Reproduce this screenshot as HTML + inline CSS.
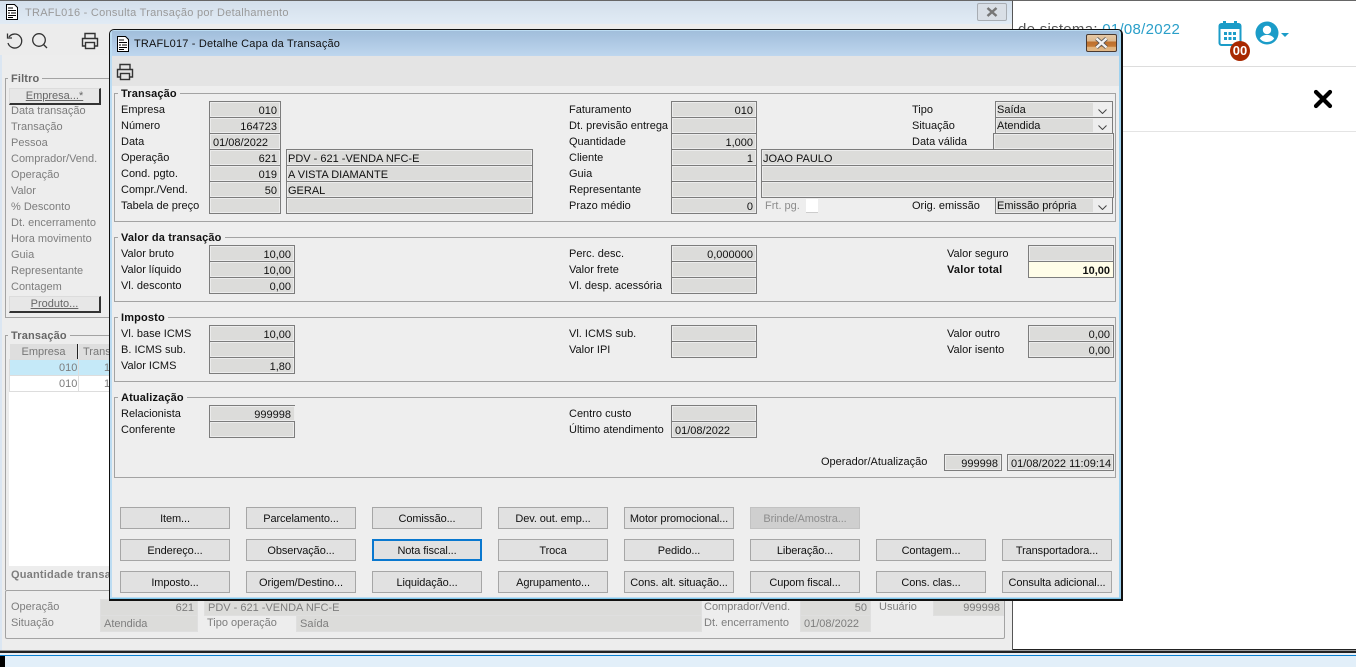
<!DOCTYPE html>
<html lang="pt"><head><meta charset="utf-8"><title>TRAFL017</title>
<style>
html,body{margin:0;padding:0;width:1356px;height:667px;overflow:hidden;background:#fff}
body{position:relative;font:11px/16px "Liberation Sans",sans-serif;color:#111;letter-spacing:0}
div,span,svg{position:absolute;box-sizing:border-box;white-space:nowrap}
.t{height:16px;margin-top:1px}
.f{height:17px;border:1px solid #7c7c7c;background:#dcdcda;box-shadow:inset 0 0 0 1px #ececec;text-align:right;padding:2px 3px 0;line-height:15px}
.l{text-align:left}
.n{padding-left:1px}
.g{border:1px solid #a3a3a3;height:20px}
.gt{font-weight:bold;background:#eee;padding:0 3px;top:-8px;left:3px;letter-spacing:.15px}
.b{width:110px;height:22px;border:1px solid #a6a6a6;background:#e1e1e1;text-align:center;line-height:22px;letter-spacing:-.1px}
.bg .t{color:#7d7d7d;margin-top:0}
.bf{height:17px;border:1px solid #dfdfdf;background:#dcdcda;color:#7d7d7d;text-align:right;padding:1px 3px 0;line-height:15px}
.sel{padding-left:1px;padding-top:1px}
.sel::after{content:"";position:absolute;right:-1px;top:-1px;bottom:-1px;width:19px;background:#eee;border:1px solid #7c7c7c;border-left:0}
.sel svg{z-index:2;right:5px;top:7px}
</style></head><body>

<!-- page behind -->
<div style="left:0;top:0;width:1356px;height:1px;background:#666"></div>
<div class="t" style="margin:0;left:1018px;top:21px;font-size:15px;line-height:18px;color:#555;letter-spacing:.28px">de sistema: <span style="position:static;color:#2a9fc9">01/08/2022</span></div>
<div style="left:1012px;top:1px;width:344px;height:19px;background:#fff"></div>
<div style="left:1012px;top:66px;width:344px;height:1px;background:#ddd"></div>
<div style="left:1012px;top:131px;width:344px;height:1px;background:#e4e4e4"></div>
<svg style="left:1218px;top:20px" width="24" height="26" viewBox="0 0 24 26"><rect x="1.500" y="4" width="21" height="21" rx="2" fill="none" stroke="#1b9cc8" stroke-width="2"/><rect x="1" y="4" width="22" height="5" fill="#1b9cc8"/><rect x="5" y="1" width="3" height="5" fill="#1b9cc8"/><rect x="16" y="1" width="3" height="5" fill="#1b9cc8"/><g fill="#1b9cc8"><rect x="6" y="12" width="3" height="3"/><rect x="10.500" y="12" width="3" height="3"/><rect x="15" y="12" width="3" height="3"/><rect x="6" y="17" width="3" height="3"/><rect x="10.500" y="17" width="3" height="3"/><rect x="15" y="17" width="3" height="3"/></g></svg>
<div style="left:1230px;top:41px;width:20px;height:20px;border-radius:50%;background:#a82800;color:#fff;font:bold 13px/20px 'Liberation Sans',sans-serif;text-align:center;letter-spacing:0">00</div>
<svg style="left:1255px;top:21px" width="36" height="24" viewBox="0 0 36 24"><circle cx="12" cy="12" r="11.500" fill="#1b9cc8"/><circle cx="12" cy="9" r="4.200" fill="#fff"/><path d="M4.800 17.500C6.500 14.800 9 14 12 14s5.500.8 7.200 3.500C17.500 19.800 15 21 12 21s-5.500-1.200-7.200-3.500z" fill="#fff"/><path d="M26 12h8l-4 4z" fill="#1b9cc8"/></svg>
<svg style="left:1313px;top:89px" width="20" height="20" viewBox="0 0 20 20"><path d="M3 3L17 17M17 3L3 17" stroke="#000" stroke-width="4.200" stroke-linecap="round"/></svg>

<!-- bottom bar -->
<div style="left:0;top:649px;width:1356px;height:4px;background:linear-gradient(#222,#222 25%,#999 25%,#999 50%,#222 50%)"></div>
<div style="left:0;top:653px;width:1356px;height:2px;background:#e8eef4"></div>
<div style="left:0;top:655px;width:1356px;height:12px;background:#e2eff9;border-top:1px solid #0a7fd0"></div>
<div style="left:0;top:656px;width:5px;height:11px;background:#000"></div>

<!-- background window -->
<div class="bg" style="left:0;top:0;width:1013px;height:650px;background:#ededed;border-right:1px solid #555;border-top:1px solid #666;overflow:hidden">
 <div style="left:0;top:0;width:2px;height:652px;background:#dbe6f2"></div>
 <div style="left:0;top:0;width:1012px;height:23px;background:linear-gradient(#d3dfeb,#e1ebf5)"></div>
 <div style="left:0;top:23px;width:1012px;height:31px;background:#ececec"></div>
 <div class="t" style="left:25px;top:4px;font-size:11px;color:#9a9a9a;letter-spacing:.27px">TRAFL016 - Consulta Transação por Detalhamento</div>
 <svg style="left:6px;top:3px" width="12" height="16" viewBox="0 0 12 16"><path d="M.5.5h8l3 3v12H.5z" fill="#fff" stroke="#000"/><path d="M2 4h5M2 6.500h8M2 9h2M5 9h5M2 11.500h8M2 13.500h5" stroke="#000"/></svg>
 <div style="left:977px;top:2px;width:30px;height:18px;border:1px solid #a8adb3;border-radius:2px;background:#d9dfe6"></div>
 <svg style="left:985px;top:6px" width="14" height="10" viewBox="0 0 14 10"><path d="M2.500 1L11.500 9M11.500 1L2.500 9" stroke="#777" stroke-width="2.500"/></svg>
 <svg style="left:5px;top:31px" width="20" height="18" viewBox="0 0 20 18" fill="none" stroke="#333" stroke-width="1.300"><path d="M4 5A7 7 0 1 1 3 11"/><path d="M2.500 1.500V6H7"/></svg>
 <svg style="left:31px;top:31px" width="18" height="18" viewBox="0 0 18 18" fill="none" stroke="#333" stroke-width="1.300"><circle cx="8" cy="8" r="6.300"/><path d="M12.500 12.500L16 16"/></svg>
 <svg style="left:81px;top:31px" width="18" height="18" viewBox="0 0 18 18" fill="none" stroke="#333" stroke-width="1.400"><path d="M4 6V1.500h10V6M4 14H1.500V6.500h15V14H14"/><rect x="4.500" y="10.500" width="9" height="6"/></svg>
 <div class="g" style="left:5px;top:77px;width:110px;height:240px;border-right:0"><span class="gt" style="background:#ededed;color:#666;top:-8px;left:2px">Filtro</span></div>
 <div style="left:9px;top:87px;width:92px;height:17px;border:1px solid #dcdcdc;border-right:2px solid #333;border-bottom:2px solid #333;background:#e7e7e7;color:#666;text-align:center;line-height:14px;text-decoration:underline">Empresa...*</div>
 <div class="t" style="left:11px;top:102px">Data transação</div>
 <div class="t" style="left:11px;top:118px">Transação</div>
 <div class="t" style="left:11px;top:134px">Pessoa</div>
 <div class="t" style="left:11px;top:150px">Comprador/Vend.</div>
 <div class="t" style="left:11px;top:166px">Operação</div>
 <div class="t" style="left:11px;top:182px">Valor</div>
 <div class="t" style="left:11px;top:198px">% Desconto</div>
 <div class="t" style="left:11px;top:214px">Dt. encerramento</div>
 <div class="t" style="left:11px;top:230px">Hora movimento</div>
 <div class="t" style="left:11px;top:246px">Guia</div>
 <div class="t" style="left:11px;top:262px">Representante</div>
 <div class="t" style="left:11px;top:278px">Contagem</div>
 <div style="left:9px;top:295px;width:92px;height:17px;border:1px solid #dcdcdc;border-right:2px solid #333;border-bottom:2px solid #333;background:#e7e7e7;color:#666;text-align:center;line-height:14px;text-decoration:underline">Produto...</div>

 <div class="g" style="left:5px;top:334px;width:110px;height:255px;border-right:0;border-bottom:0"><span class="gt" style="background:#ededed;color:#666;top:-8px;left:2px">Transação</span></div>
 <div style="left:9px;top:365px;width:101px;height:200px;background:#fff"></div>
 <div style="left:10px;top:343px;width:68px;height:16px;background:#dedede;text-align:center;color:#777;border-right:1px solid #222">Empresa</div>
 <div style="left:79px;top:343px;width:30px;height:16px;background:#dedede;color:#777;padding-left:4px;overflow:hidden">Transação</div>
 <div style="left:9px;top:358px;width:101px;height:17px;background:#c5e9f8;border:1px solid #ddd"></div>
 <div style="left:9px;top:374px;width:101px;height:17px;background:#fff;border:1px solid #ddd"></div>
 <div style="left:78px;top:358px;width:1px;height:33px;background:#ddd"></div>
 <div class="t" style="left:59px;top:359px">010</div><div class="t" style="left:59px;top:375px">010</div>
 <div class="t" style="left:104px;top:359px">1</div><div class="t" style="left:104px;top:375px">1</div>
 <div class="t" style="left:11px;top:566px;font-weight:bold;letter-spacing:.2px">Quantidade transação</div>
 <div class="g" style="left:5px;top:589px;width:1000px;height:49px;border-radius:2px"></div>
 <div class="t" style="left:11px;top:598px">Operação</div>
 <div class="t" style="left:11px;top:614px">Situação</div>
 <div class="bf" style="left:100px;top:598px;width:98px">621</div>
 <div class="bf l" style="left:100px;top:614px;width:98px;text-align:left">Atendida</div>
 <div class="bf" style="left:204px;top:598px;width:498px;text-align:left">PDV - 621 -VENDA NFC-E</div>
 <div class="t" style="left:207px;top:614px">Tipo operação</div>
 <div class="bf" style="left:296px;top:614px;width:406px;text-align:left">Saída</div>
 <div class="t" style="left:704px;top:598px">Comprador/Vend.</div>
 <div class="t" style="left:704px;top:614px">Dt. encerramento</div>
 <div class="bf" style="left:800px;top:598px;width:71px">50</div>
 <div class="bf" style="left:800px;top:614px;width:71px;text-align:left">01/08/2022</div>
 <div class="t" style="left:879px;top:598px">Usuário</div>
 <div class="bf" style="left:933px;top:598px;width:71px">999998</div>
</div>

<!-- main dialog -->
<div style="left:109px;top:29px;width:1014px;height:572px;background:#eee;border:1px solid #111;border-width:1px 2px 2px 1px;border-radius:5px 5px 0 0;box-shadow:inset 0 0 0 2px #bcdcf2;overflow:hidden">
 <div style="left:2px;top:1px;width:1008px;height:25px;background:linear-gradient(#a1bedb,#bed6ee)"></div>
 <div style="left:2px;top:26px;width:1008px;height:30px;background:#e4e4e4"></div>
 <div style="left:0;top:0;width:2px;height:570px;background:#bcdcf2"></div>
 <div style="left:1009px;top:0;width:3px;height:570px;background:#9fd2ef"></div>
 <div style="left:0;top:568px;width:1012px;height:2px;background:#7cc6ea"></div>
</div>
<svg style="left:117px;top:36px" width="12" height="16" viewBox="0 0 12 16"><path d="M.5.500h8l3 3v12H.5z" fill="#fff" stroke="#000"/><path d="M2 4h5M2 6.500h8M2 9h2M5 9h5M2 11.500h8M2 13.500h5" stroke="#000"/></svg>
<div class="t" style="margin:0;left:134px;top:36px;font-size:11px;color:#111;letter-spacing:.17px">TRAFL017 - Detalhe Capa da Transação</div>
<div style="left:1086px;top:34px;width:31px;height:18px;border:1px solid #4a3a30;border-radius:2px;background:linear-gradient(#e6c9a6 0,#dcb88e 40%,#bd6f2d 42%,#c67a35 72%,#dfb27c 75%,#e2b988 100%)"></div>
<svg style="left:1094px;top:37px" width="15" height="12" viewBox="0 0 15 12"><path d="M2.500 1.500L12.500 10.500M12.500 1.500L2.500 10.500" stroke="#555" stroke-width="4"/><path d="M2.500 1.500L12.500 10.500M12.500 1.500L2.500 10.500" stroke="#f4f4f4" stroke-width="2.400"/></svg>
<svg style="left:116px;top:63px" width="18" height="18" viewBox="0 0 18 18" fill="none" stroke="#333" stroke-width="1.400"><path d="M4 6V1.500h10V6M4 14H1.500V6.500h15V14H14"/><rect x="4.500" y="10.500" width="9" height="6"/></svg>

<!-- groups -->
<div class="g" style="left:114px;top:93px;width:1002px;height:129px"><span class="gt">Transação</span></div>
<div class="g" style="left:114px;top:237px;width:1002px;height:65px"><span class="gt">Valor da transação</span></div>
<div class="g" style="left:114px;top:317px;width:1002px;height:65px"><span class="gt">Imposto</span></div>
<div class="g" style="left:114px;top:397px;width:1002px;height:81px"><span class="gt">Atualização</span></div>

<!-- Transacao -->
<div class="t" style="left:121px;top:101px">Empresa</div>
<div class="t" style="left:121px;top:117px">Número</div>
<div class="t" style="left:121px;top:133px">Data</div>
<div class="t" style="left:121px;top:149px">Operação</div>
<div class="t" style="left:121px;top:165px">Cond. pgto.</div>
<div class="t" style="left:121px;top:181px">Compr./Vend.</div>
<div class="t" style="left:121px;top:197px">Tabela de preço</div>
<div class="f" style="left:209px;top:101px;width:72px">010</div>
<div class="f" style="left:209px;top:117px;width:72px">164723</div>
<div class="f l" style="left:209px;top:133px;width:72px">01/08/2022</div>
<div class="f" style="left:209px;top:149px;width:72px">621</div>
<div class="f" style="left:209px;top:165px;width:72px">019</div>
<div class="f" style="left:209px;top:181px;width:72px">50</div>
<div class="f" style="left:209px;top:197px;width:72px"></div>
<div class="f l n" style="left:286px;top:149px;width:247px">PDV - 621 -VENDA NFC-E</div>
<div class="f l n" style="left:286px;top:165px;width:247px">A VISTA DIAMANTE</div>
<div class="f l n" style="left:286px;top:181px;width:247px">GERAL</div>
<div class="f" style="left:286px;top:197px;width:247px"></div>

<div class="t" style="left:569px;top:101px">Faturamento</div>
<div class="t" style="left:569px;top:117px">Dt. previsão entrega</div>
<div class="t" style="left:569px;top:133px">Quantidade</div>
<div class="t" style="left:569px;top:149px">Cliente</div>
<div class="t" style="left:569px;top:165px">Guia</div>
<div class="t" style="left:569px;top:181px">Representante</div>
<div class="t" style="left:569px;top:197px">Prazo médio</div>
<div class="f" style="left:671px;top:101px;width:86px">010</div>
<div class="f" style="left:671px;top:117px;width:86px"></div>
<div class="f" style="left:671px;top:133px;width:86px">1,000</div>
<div class="f" style="left:671px;top:149px;width:86px">1</div>
<div class="f" style="left:671px;top:165px;width:86px"></div>
<div class="f" style="left:671px;top:181px;width:86px"></div>
<div class="f" style="left:671px;top:197px;width:86px">0</div>
<div class="f l n" style="left:761px;top:149px;width:353px">JOAO PAULO</div>
<div class="f" style="left:761px;top:165px;width:353px"></div>
<div class="f" style="left:761px;top:181px;width:353px"></div>
<div class="t" style="left:765px;top:197px;color:#8c8c8c">Frt. pg.</div>
<div style="left:806px;top:199px;width:12px;height:13px;background:#fff;box-shadow:0 1px 0 #ccc"></div>

<div class="t" style="left:912px;top:101px">Tipo</div>
<div class="t" style="left:912px;top:117px">Situação</div>
<div class="t" style="left:912px;top:133px">Data válida</div>
<div class="t" style="left:912px;top:197px">Orig. emissão</div>
<div class="f l sel" style="left:995px;top:101px;width:118px">Saída<svg width="9" height="5" viewBox="0 0 9 5"><path d="M.5.500L4.500 4.500L8.500.5" fill="none" stroke="#444"/></svg></div>
<div class="f l sel" style="left:995px;top:117px;width:118px">Atendida<svg width="9" height="5" viewBox="0 0 9 5"><path d="M.5.500L4.500 4.500L8.500.5" fill="none" stroke="#444"/></svg></div>
<div class="f" style="left:993px;top:133px;width:121px"></div>
<div class="f l sel" style="left:995px;top:197px;width:118px">Emissão própria<svg width="9" height="5" viewBox="0 0 9 5"><path d="M.5.500L4.500 4.500L8.500.5" fill="none" stroke="#444"/></svg></div>

<!-- Valor -->
<div class="t" style="left:121px;top:245px">Valor bruto</div>
<div class="t" style="left:121px;top:261px">Valor líquido</div>
<div class="t" style="left:121px;top:277px">Vl. desconto</div>
<div class="f" style="left:209px;top:245px;width:86px">10,00</div>
<div class="f" style="left:209px;top:261px;width:86px">10,00</div>
<div class="f" style="left:209px;top:277px;width:86px">0,00</div>
<div class="t" style="left:569px;top:245px">Perc. desc.</div>
<div class="t" style="left:569px;top:261px">Valor frete</div>
<div class="t" style="left:569px;top:277px">Vl. desp. acessória</div>
<div class="f" style="left:671px;top:245px;width:86px">0,000000</div>
<div class="f" style="left:671px;top:261px;width:86px"></div>
<div class="f" style="left:671px;top:277px;width:86px"></div>
<div class="t" style="left:947px;top:245px">Valor seguro</div>
<div class="t" style="left:947px;top:261px;font-weight:bold;letter-spacing:.2px">Valor total</div>
<div class="f" style="left:1028px;top:245px;width:86px"></div>
<div class="f" style="left:1028px;top:261px;width:86px;background:#fffde8;font-weight:bold;box-shadow:none">10,00</div>

<!-- Imposto -->
<div class="t" style="left:121px;top:325px">Vl. base ICMS</div>
<div class="t" style="left:121px;top:341px">B. ICMS sub.</div>
<div class="t" style="left:121px;top:357px">Valor ICMS</div>
<div class="f" style="left:209px;top:325px;width:86px">10,00</div>
<div class="f" style="left:209px;top:341px;width:86px"></div>
<div class="f" style="left:209px;top:357px;width:86px">1,80</div>
<div class="t" style="left:569px;top:325px">Vl. ICMS sub.</div>
<div class="t" style="left:569px;top:341px">Valor IPI</div>
<div class="f" style="left:671px;top:325px;width:86px"></div>
<div class="f" style="left:671px;top:341px;width:86px"></div>
<div class="t" style="left:947px;top:325px">Valor outro</div>
<div class="t" style="left:947px;top:341px">Valor isento</div>
<div class="f" style="left:1028px;top:325px;width:86px">0,00</div>
<div class="f" style="left:1028px;top:341px;width:86px">0,00</div>

<!-- Atualizacao -->
<div class="t" style="left:121px;top:405px">Relacionista</div>
<div class="t" style="left:121px;top:421px">Conferente</div>
<div class="f" style="left:209px;top:405px;width:86px;border-right:0;padding-right:4px">999998</div>
<div class="f" style="left:209px;top:421px;width:86px"></div>
<div class="t" style="left:569px;top:405px">Centro custo</div>
<div class="t" style="left:569px;top:421px">Último atendimento</div>
<div class="f" style="left:671px;top:405px;width:86px"></div>
<div class="f l" style="left:671px;top:421px;width:86px">01/08/2022</div>
<div class="t" style="left:821px;top:453px">Operador/Atualização</div>
<div class="f" style="left:944px;top:454px;width:58px">999998</div>
<div class="f l" style="left:1007px;top:454px;width:107px">01/08/2022 11:09:14</div>

<!-- Buttons -->
<div class="b" style="left:120px;top:507px">Item...</div>
<div class="b" style="left:246px;top:507px">Parcelamento...</div>
<div class="b" style="left:372px;top:507px">Comissão...</div>
<div class="b" style="left:498px;top:507px">Dev. out. emp...</div>
<div class="b" style="left:624px;top:507px">Motor promocional...</div>
<div class="b" style="left:750px;top:507px;background:#cfcfcf;color:#8d8d8d;border-color:#c2c2c2">Brinde/Amostra...</div>
<div class="b" style="left:120px;top:539px">Endereço...</div>
<div class="b" style="left:246px;top:539px">Observação...</div>
<div class="b" style="left:372px;top:539px;border:2px solid #0a78cf;line-height:20px">Nota fiscal...</div>
<div class="b" style="left:498px;top:539px">Troca</div>
<div class="b" style="left:624px;top:539px">Pedido...</div>
<div class="b" style="left:750px;top:539px">Liberação...</div>
<div class="b" style="left:876px;top:539px">Contagem...</div>
<div class="b" style="left:1002px;top:539px">Transportadora...</div>
<div class="b" style="left:120px;top:571px">Imposto...</div>
<div class="b" style="left:246px;top:571px">Origem/Destino...</div>
<div class="b" style="left:372px;top:571px">Liquidação...</div>
<div class="b" style="left:498px;top:571px">Agrupamento...</div>
<div class="b" style="left:624px;top:571px">Cons. alt. situação...</div>
<div class="b" style="left:750px;top:571px">Cupom fiscal...</div>
<div class="b" style="left:876px;top:571px">Cons. clas...</div>
<div class="b" style="left:1002px;top:571px">Consulta adicional...</div>
</body></html>
